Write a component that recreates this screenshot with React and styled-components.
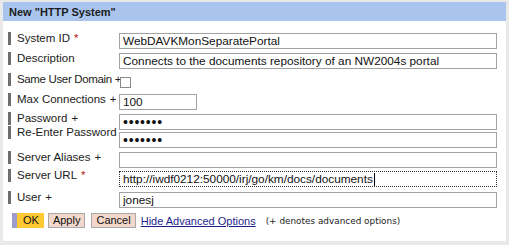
import React from 'react';
import styled, { createGlobalStyle } from 'styled-components';

const GlobalStyle = createGlobalStyle`
  html, body {
    margin: 0;
    padding: 0;
    background: #e9e9e9;
  }
  body {
    font-family: "Liberation Sans", Arial, sans-serif;
    font-size: 12px;
    color: #111;
  }
`;

const Panel = styled.div`
  margin: 2px 3px 0 3px;
  width: 503px;
  height: 239px;
  background: #ffffff;
  box-sizing: border-box;
`;

const Header = styled.div`
  height: 19px;
  background: #a9c5ee;
  padding-left: 6px;
  display: flex;
  align-items: center;
  font-weight: bold;
  font-size: 11px;
  color: #1c1c1c;
`;

const Form = styled.div`
  padding: 11px 9px 0 5px;
  display: flex;
  flex-direction: column;
`;

const Row = styled.div`
  display: flex;
  align-items: flex-start;
  height: ${(p) => p.$h || 20}px;
`;

const Label = styled.div`
  width: 111px;
  flex: none;
  display: flex;
  align-items: flex-start;
  gap: 6px;
  margin-top: ${(p) => p.$dy || 0}px;
  white-space: nowrap;
  line-height: 13px;
  font-size: 11.5px;
  letter-spacing: ${(p) => (p.$squeeze ? '-0.35px' : '0')};
  color: #222;

  &::before {
    content: '';
    width: 3px;
    height: 13px;
    background: #6e6e6e;
    flex: none;
  }
`;

const Req = styled.span`
  color: #b01c1c;
  margin-left: 4px;
`;

const Adv = styled.span`
  margin-left: ${(p) => (p.$close ? 3 : 4)}px;
`;

const Input = styled.input`
  box-sizing: border-box;
  width: ${(p) => p.$w || 378}px;
  height: 16px;
  margin: 1px 0 0 0;
  padding: 0 3px;
  border: 1px solid #a2a2a2;
  font-family: "Liberation Sans", Arial, sans-serif;
  font-size: ${(p) => (p.type === 'password' ? '14px' : '11.8px')};
  color: #111;
  outline: none;
  background: #fff;
  letter-spacing: ${(p) => (p.type === 'password' ? '0.8px' : '0')};
`;

const FocusField = styled.div`
  box-sizing: border-box;
  width: 378px;
  height: 16px;
  margin-top: 1px;
  padding: 0 3px;
  border: 1px dotted #333;
  display: flex;
  align-items: center;
  font-size: 11.8px;
  color: #111;
`;

const Caret = styled.span`
  width: 1px;
  height: 13px;
  background: #000;
  margin-left: 1px;
`;

const Check = styled.span`
  width: 11px;
  height: 11px;
  margin-top: 4px;
  margin-left: 1px;
  border: 1px solid #8a8a8a;
  box-sizing: border-box;
  background: #fff;
`;

const Buttons = styled.div`
  display: flex;
  align-items: center;
  margin-top: 2px;
  padding-left: 4px;
  height: 15px;
`;

const Button = styled.button`
  height: 15px;
  padding: 0 ${(p) => (p.$primary ? 5 : 4)}px 0 ${(p) => (p.$primary ? 11 : 4)}px;
  margin: 0 ${(p) => (p.$primary ? 4 : 6)}px 0 0;
  border: ${(p) => (p.$primary ? 'none' : '1px solid #a8a8a8')};
  background: ${(p) =>
    p.$primary
      ? 'linear-gradient(to right, #9c9ccf 0, #9c9ccf 5px, #ffc935 5px)'
      : '#f2d7ca'};
  font-family: "Liberation Sans", Arial, sans-serif;
  font-size: 11px;
  color: #111;
  line-height: 13px;
  box-sizing: border-box;
`;

const Link = styled.a`
  color: #1e1e8c;
  text-decoration: underline;
  font-size: 11px;
  margin-left: -1px;
`;

const Note = styled.span`
  margin-left: 10px;
  font-family: "DejaVu Sans", Verdana, sans-serif;
  font-size: 8.9px;
  color: #222;
`;

export default function App() {
  return (
    <>
      <GlobalStyle />
      <Panel>
        <Header>New "HTTP System"</Header>
        <Form>
          <Row>
            <Label>
              <span>System ID<Req>*</Req></span>
            </Label>
            <Input defaultValue="WebDAVKMonSeparatePortal" />
          </Row>
          <Row $h={21}>
            <Label>Description</Label>
            <Input defaultValue="Connects to the documents repository of an NW2004s portal" />
          </Row>
          <Row>
            <Label $squeeze>
              <span>Same User Domain<Adv $close>+</Adv></span>
            </Label>
            <Check />
          </Row>
          <Row>
            <Label>
              <span>Max Connections<Adv>+</Adv></span>
            </Label>
            <Input $w={78} defaultValue="100" />
          </Row>
          <Row $h={18}>
            <Label $dy={-1}>
              <span>Password<Adv>+</Adv></span>
            </Label>
            <Input type="password" defaultValue="1234567" />
          </Row>
          <Row>
            <Label $dy={-5}>Re-Enter Password</Label>
            <Input type="password" defaultValue="1234567" />
          </Row>
          <Row $h={19}>
            <Label>
              <span>Server Aliases<Adv>+</Adv></span>
            </Label>
            <Input defaultValue="" />
          </Row>
          <Row $h={21}>
            <Label $dy={-1}>
              <span>Server URL<Req>*</Req></span>
            </Label>
            <FocusField>
              http://iwdf0212:50000/irj/go/km/docs/documents
              <Caret />
            </FocusField>
          </Row>
          <Row $h={20}>
            <Label>
              <span>User<Adv>+</Adv></span>
            </Label>
            <Input defaultValue="jonesj" />
          </Row>
          <Buttons>
            <Button $primary>OK</Button>
            <Button>Apply</Button>
            <Button>Cancel</Button>
            <Link href="#">Hide Advanced Options</Link>
            <Note>(+ denotes advanced options)</Note>
          </Buttons>
        </Form>
      </Panel>
    </>
  );
}
